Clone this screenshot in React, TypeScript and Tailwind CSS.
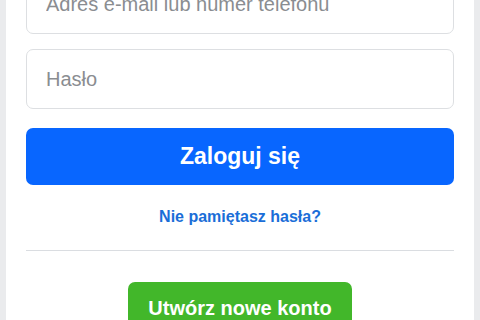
import React from "react";

const font = { fontFamily: '"Liberation Sans", Arial, sans-serif' };

const Field = ({ placeholder, type }: { placeholder: string; type: string }) => {
  return (
    <input
      type={type}
      placeholder={placeholder}
      className="h-[60px] w-full rounded-[7px] border border-[#dddfe2] bg-white px-[19px] text-[20px] text-[#1c1e21] outline-none placeholder:text-[#8a8d91] font-['Liberation_Sans',Arial,sans-serif]"
    />
  );
};

export default function App() {
  return (
    <div
      className="h-[320px] w-[480px] overflow-hidden bg-[#eaebed] px-[6px]"
      style={font}
    >
      <div className="-mt-[26px] flex min-h-[400px] flex-col bg-white px-5">
        {/* login fields */}
        <div className="flex flex-col gap-[15px]">
          <Field type="text" placeholder="Adres e-mail lub numer telefonu" />
          <Field type="password" placeholder="Hasło" />
        </div>

        <button
          type="button"
          className="mt-[19px] h-[57px] w-full rounded-[7px] bg-[#0866ff] text-[23px] font-bold text-white"
        >
          Zaloguj się
        </button>

        <a className="mt-[22px] block text-center text-[16px] leading-5 font-bold text-[#1a6ed8]">
          Nie pamiętasz hasła?
        </a>

        <div className="mt-[23px] h-px bg-[#dadde1]" />

        <div className="mt-[31px] flex justify-center">
          <button
            type="button"
            className="h-[52px] rounded-[7px] bg-[#42b72a] px-5 text-[20px] font-bold text-white"
          >
            Utwórz nowe konto
          </button>
        </div>
      </div>
    </div>
  );
}
